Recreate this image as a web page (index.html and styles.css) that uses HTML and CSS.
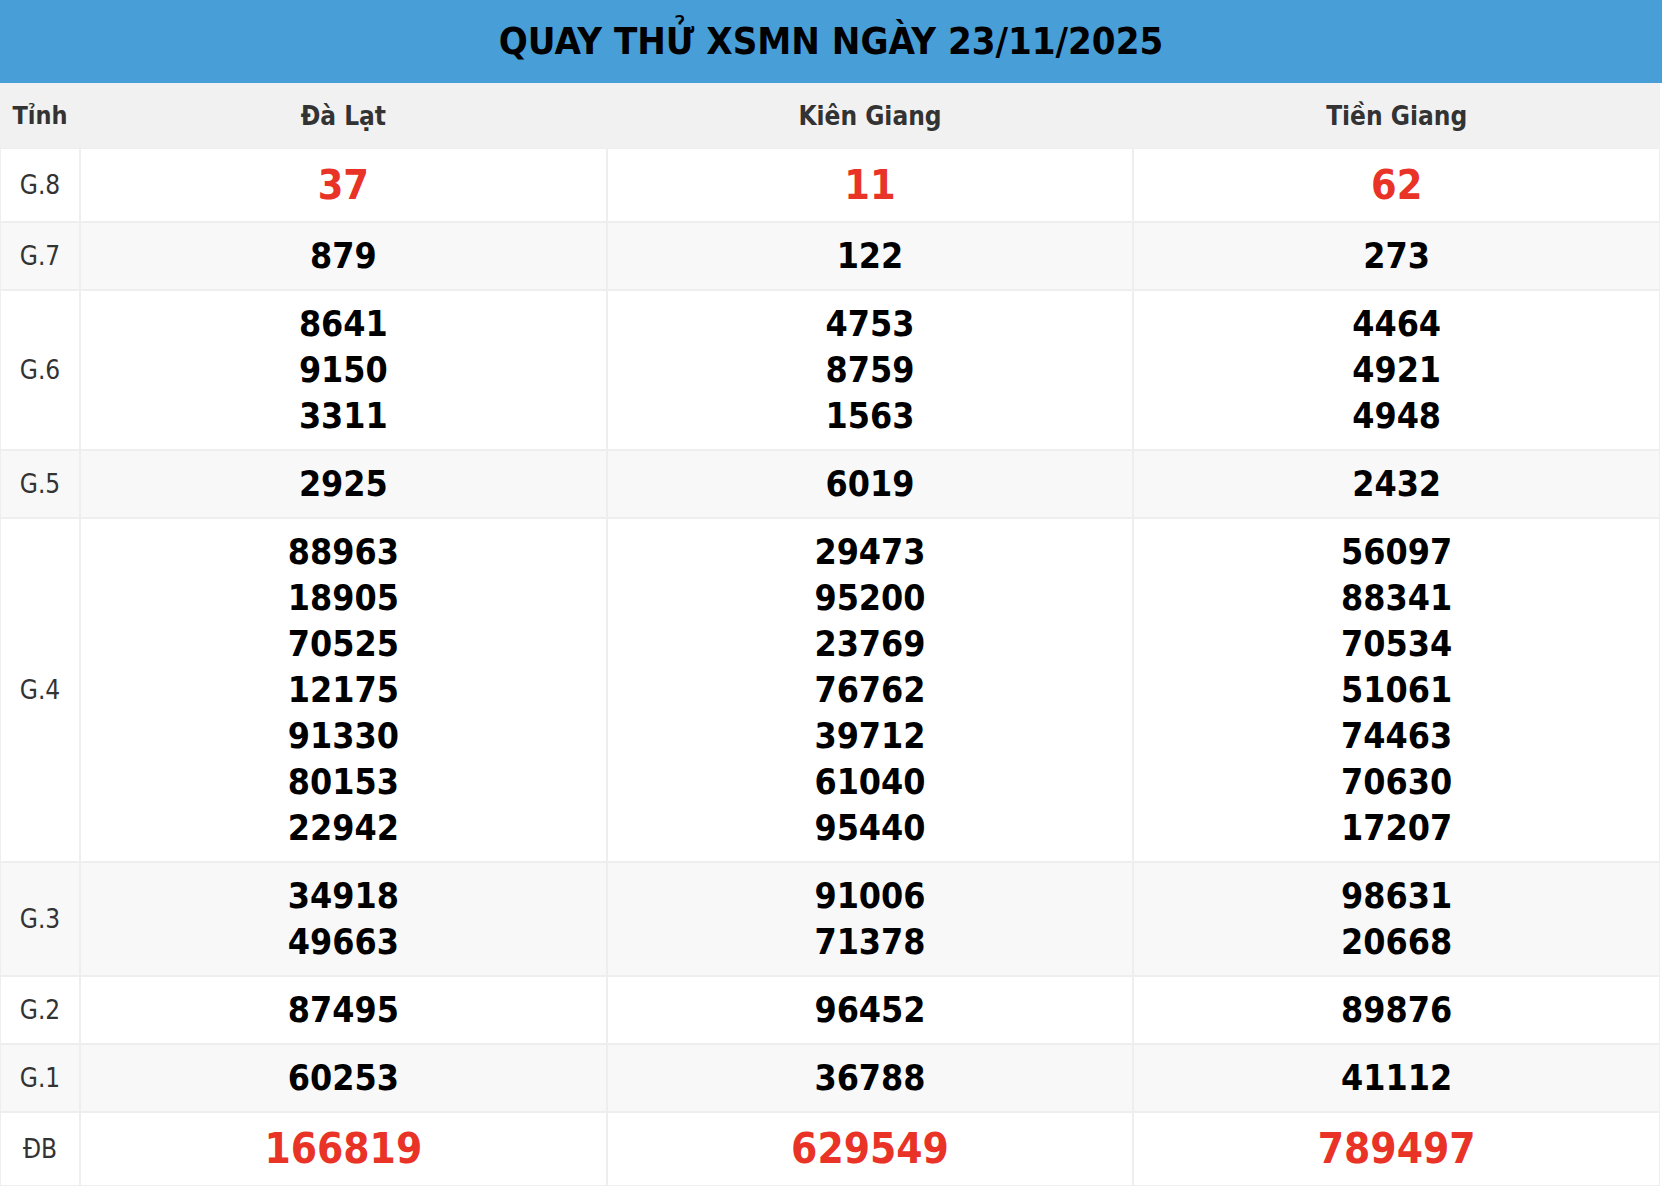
FILE: index.html
```html
<!DOCTYPE html>
<html lang="vi">
<head>
<meta charset="utf-8">
<title>Quay thử XSMN</title>
<link rel="stylesheet" href="styles.css">
</head>
<body>
<div class="title">QUAY THỬ XSMN NGÀY 23/11/2025</div>
<table class="kq">
  <thead>
    <tr><th class="lbl">Tỉnh</th><th>Đà Lạt</th><th>Kiên Giang</th><th>Tiền Giang</th></tr>
  </thead>
  <tbody>
    <tr class="r8"><td class="lbl">G.8</td><td class="red">37</td><td class="red">11</td><td class="red">62</td></tr>
    <tr class="alt"><td class="lbl">G.7</td><td>879</td><td>122</td><td>273</td></tr>
    <tr><td class="lbl">G.6</td><td>8641<br>9150<br>3311</td><td>4753<br>8759<br>1563</td><td>4464<br>4921<br>4948</td></tr>
    <tr class="alt"><td class="lbl">G.5</td><td>2925</td><td>6019</td><td>2432</td></tr>
    <tr><td class="lbl">G.4</td>
      <td>88963<br>18905<br>70525<br>12175<br>91330<br>80153<br>22942</td>
      <td>29473<br>95200<br>23769<br>76762<br>39712<br>61040<br>95440</td>
      <td>56097<br>88341<br>70534<br>51061<br>74463<br>70630<br>17207</td></tr>
    <tr class="alt"><td class="lbl">G.3</td><td>34918<br>49663</td><td>91006<br>71378</td><td>98631<br>20668</td></tr>
    <tr><td class="lbl">G.2</td><td>87495</td><td>96452</td><td>89876</td></tr>
    <tr class="alt"><td class="lbl">G.1</td><td>60253</td><td>36788</td><td>41112</td></tr>
    <tr class="rdb"><td class="lbl">ĐB</td><td class="red">166819</td><td class="red">629549</td><td class="red">789497</td></tr>
  </tbody>
</table>
</body>
</html>
```
FILE: styles.css
```css
html, body {
  margin: 0;
  padding: 0;
  background: #ffffff;
}
body {
  font-family: "DejaVu Sans Condensed", "DejaVu Sans", sans-serif;
  font-stretch: condensed;
  color: #000;
}
.title {
  background: #489ed7;
  height: 83px;
  line-height: 83px;
  text-align: center;
  font-size: 38px;
  font-weight: bold;
  color: #000;
}
.kq {
  width: 1660px;
  border-collapse: separate;
  border-spacing: 0;
  table-layout: fixed;
}
.kq th, .kq td {
  border: 1px solid #eeeeee;
  text-align: center;
  vertical-align: middle;
}
.kq thead th {
  background: #f1f1f1;
  border-color: #f1f1f1;
  font-size: 26px;
  font-weight: bold;
  color: #333;
  height: 63px;
  padding: 0;
}
.kq thead th.lbl {
  width: 78px;
  font-size: 25px;
}
.kq td {
  font-size: 35.5px;
  font-weight: bold;
  line-height: 46px;
  padding: 10px 0;
}
.kq td.lbl {
  font-size: 26px;
  font-weight: normal;
  color: #333;
}
.kq tr.alt td {
  background: #f8f8f8;
}
.kq tr.r8 td, .kq tr.rdb td {
  padding: 11px 0;
}
.kq td.red {
  color: #e83326;
  font-size: 41px;
  line-height: 50px;
}
.kq tr.rdb td.red {
  font-size: 42px;
}
```
